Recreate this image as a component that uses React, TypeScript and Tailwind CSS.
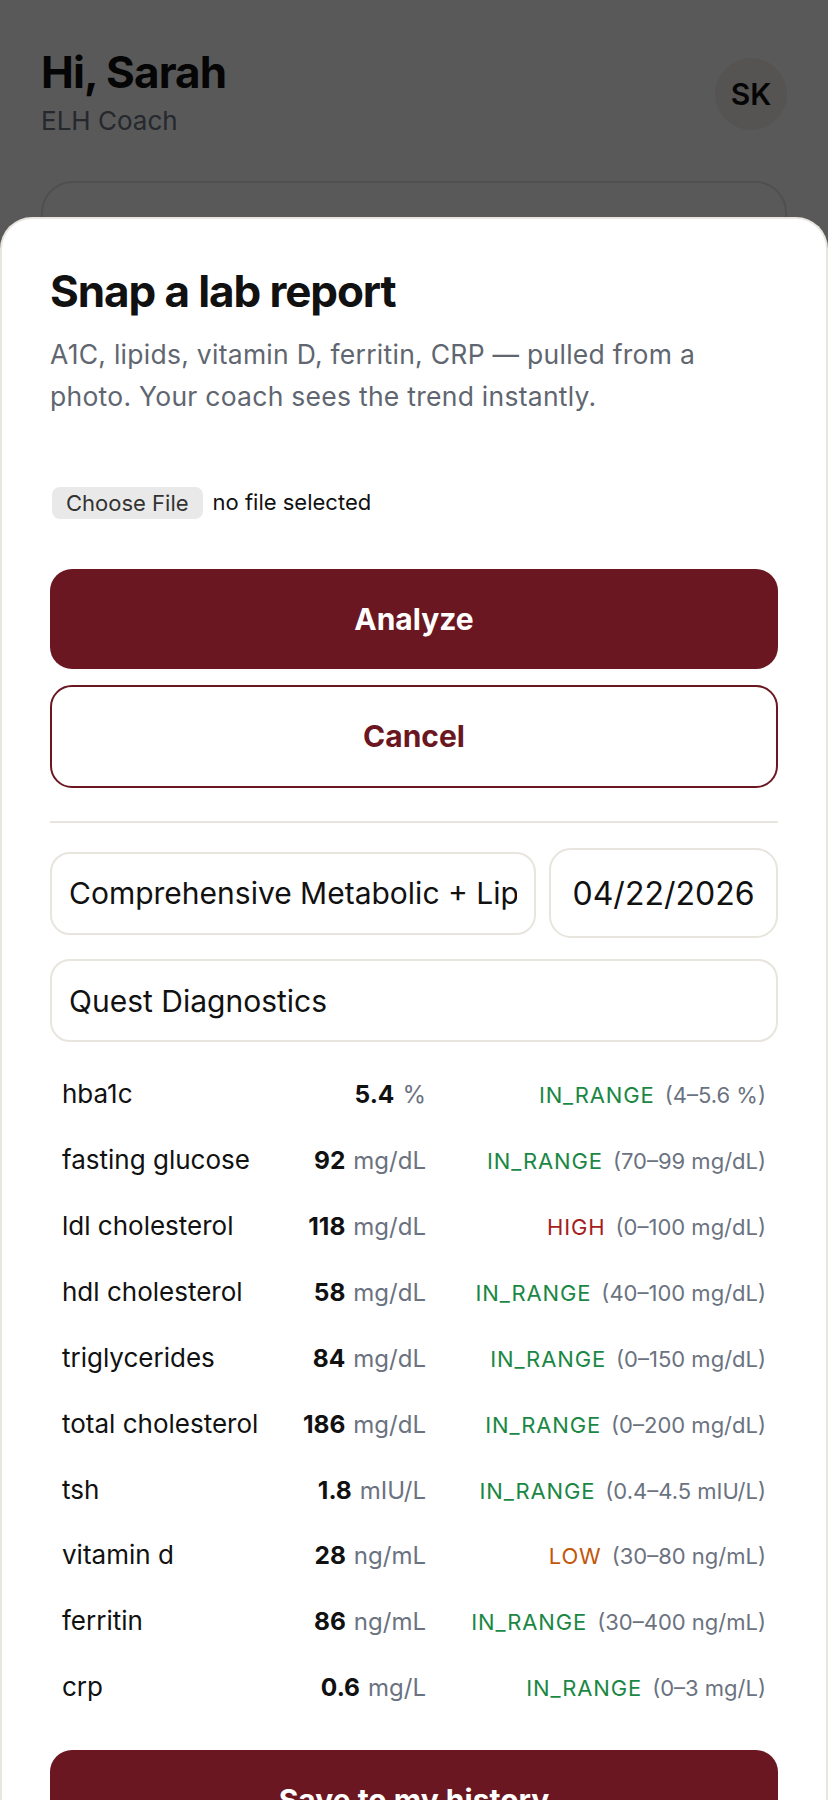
import type { ReactNode } from "react";

type Status = "IN_RANGE" | "HIGH" | "LOW";

type LabResult = {
  name: string;
  value: string;
  unit: string;
  status: Status;
  range: string;
};

const RESULTS: LabResult[] = [
  { name: "hba1c", value: "5.4", unit: "%", status: "IN_RANGE", range: "(4–5.6 %)" },
  { name: "fasting glucose", value: "92", unit: "mg/dL", status: "IN_RANGE", range: "(70–99 mg/dL)" },
  { name: "ldl cholesterol", value: "118", unit: "mg/dL", status: "HIGH", range: "(0–100 mg/dL)" },
  { name: "hdl cholesterol", value: "58", unit: "mg/dL", status: "IN_RANGE", range: "(40–100 mg/dL)" },
  { name: "triglycerides", value: "84", unit: "mg/dL", status: "IN_RANGE", range: "(0–150 mg/dL)" },
  { name: "total cholesterol", value: "186", unit: "mg/dL", status: "IN_RANGE", range: "(0–200 mg/dL)" },
  { name: "tsh", value: "1.8", unit: "mIU/L", status: "IN_RANGE", range: "(0.4–4.5 mIU/L)" },
  { name: "vitamin d", value: "28", unit: "ng/mL", status: "LOW", range: "(30–80 ng/mL)" },
  { name: "ferritin", value: "86", unit: "ng/mL", status: "IN_RANGE", range: "(30–400 ng/mL)" },
  { name: "crp", value: "0.6", unit: "mg/L", status: "IN_RANGE", range: "(0–3 mg/L)" },
];

const STATUS_COLOR: Record<Status, string> = {
  IN_RANGE: "text-[#1b8744]",
  HIGH: "text-[#a51d1d]",
  LOW: "text-[#c2570c]",
};

export default function App() {
  return (
    <div className="relative h-[1800px] w-[828px] overflow-hidden bg-white font-['Inter',sans-serif] text-[#111]">
      <DashboardBehind />
      <div className="absolute inset-0 flex flex-col bg-black/65">
        <div className="h-[217px] shrink-0" />
        <LabSheet />
      </div>
    </div>
  );
}

function DashboardBehind() {
  return (
    <div className="px-[41px] pt-[46px]">
      <div className="flex items-start justify-between">
        <div>
          <div className="text-[44px] font-bold leading-[1.21] tracking-[-0.02em]">
            Hi, Sarah
          </div>
          <div className="mt-[6px] text-[26px] leading-[1.21] text-[#6b7280]">
            ELH Coach
          </div>
        </div>
        <div className="mt-[12px] flex size-[72px] items-center justify-center rounded-full bg-[#f2efea] text-[30px] font-semibold">
          SK
        </div>
      </div>
      <div className="mt-[44px] h-[520px] rounded-[32px] border-2 border-[#e5e2dc] bg-white" />
    </div>
  );
}

function LabSheet() {
  return (
    <div className="min-h-0 flex-1 rounded-t-[32px] border-2 border-b-0 border-[#e9e5df] bg-white px-[48px] pt-[46px]">
      <h2 className="text-[44px] font-bold leading-[1.21] tracking-[-0.025em]">
        Snap a lab report
      </h2>
      <p className="mt-[15px] max-w-[700px] text-[26.5px] leading-[42px] tracking-[0.01em] text-[#5f6670]">
        A1C, lipids, vitamin D, ferritin, CRP — pulled from a photo. Your coach
        sees the trend instantly.
      </p>

      <div className="mt-[69px] ml-[2px] flex items-center gap-[10px] text-[22px]">
        <span className="h-[32px] rounded-[8px] bg-[#e9e9e9] px-[14px] leading-[32px] text-[#333]">
          Choose File
        </span>
        <span>no file selected</span>
      </div>

      <SheetButton className="mt-[50px] h-[100px] bg-[#6b1721] text-white">
        Analyze
      </SheetButton>
      <SheetButton className="mt-[16px] h-[103px] border-2 border-[#6b1721] bg-white text-[#6b1721]">
        Cancel
      </SheetButton>

      <div className="mt-[33px] h-[2px] bg-[#e8e5e0]" />

      <div className="mt-[25px] flex items-center gap-[13px]">
        <input
          className="h-[83px] min-w-0 flex-1 rounded-[20px] border-2 border-[#e8e4de] px-[17px] text-[30px] outline-none"
          readOnly
          value="Comprehensive Metabolic + Lipid Panel"
        />
        <input
          className="h-[90px] w-[229px] rounded-[22px] border-2 border-[#e8e4de] text-center text-[32px] outline-none"
          readOnly
          value="04/22/2026"
        />
      </div>
      <input
        className="mt-[21px] h-[83px] w-full rounded-[20px] border-2 border-[#e8e4de] px-[17px] text-[30px] outline-none"
        readOnly
        value="Quest Diagnostics"
      />

      <div className="mt-[15px]">
        {RESULTS.map((r) => (
          <ResultRow key={r.name} result={r} />
        ))}
      </div>

      <SheetButton className="mt-[34px] h-[100px] bg-[#6b1721] text-white">
        Save to my history
      </SheetButton>
    </div>
  );
}

function SheetButton({ children, className }: { children: ReactNode; className: string }) {
  return (
    <button
      className={`flex w-full items-center justify-center rounded-[22px] text-[30px] font-bold ${className}`}
      type="button"
    >
      {children}
    </button>
  );
}

function ResultRow({ result }: { result: LabResult }) {
  return (
    <div className="flex h-[65.9px] items-baseline px-[12px] pt-[17px]">
      <span className="w-[200px] text-[26px]">{result.name}</span>
      <span className="w-[164px] text-right">
        <span className="text-[24.5px] font-bold">{result.value}</span>
        <span className="ml-[8px] text-[24px] text-[#6b7280]">{result.unit}</span>
      </span>
      <span className="flex-1 text-right text-[22px]">
        <span className={`tracking-[0.04em] ${STATUS_COLOR[result.status]}`}>
          {result.status}
        </span>
        <span className="ml-[10px] text-[#6b7280]">{result.range}</span>
      </span>
    </div>
  );
}
